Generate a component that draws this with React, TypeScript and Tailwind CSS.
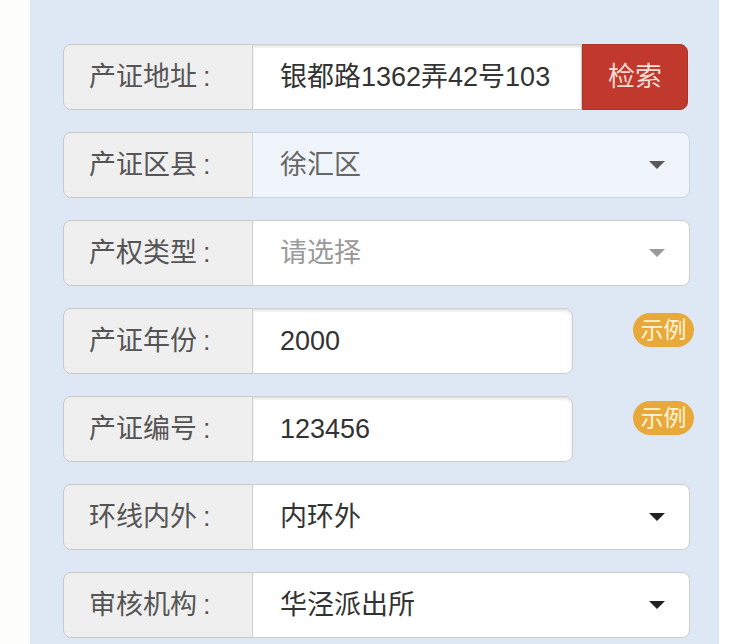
import React from "react";

const font = "font-['Liberation_Sans','Noto_Sans_CJK_SC',sans-serif]";

function Label({ text }: { text: string }) {
  return (
    <div className="flex w-[190px] shrink-0 items-center rounded-l-[8px] border border-[#c9c9c9] bg-[#efefef] pl-[25px] text-[27px] text-[#555]">
      {text}
      <span className="ml-[6px]">:</span>
    </div>
  );
}

function Arrow({ color }: { color: string }) {
  return (
    <svg width="16" height="8" viewBox="0 0 16 8" className="ml-auto">
      <path d="M0 0 L16 0 L8 8 Z" fill={color} />
    </svg>
  );
}

function Select({
  value,
  tone,
}: {
  value: string;
  tone: "disabled" | "placeholder" | "normal";
}) {
  const box =
    tone === "disabled"
      ? "bg-[#eff4fb] border-[#cdd6e0] text-[#666]"
      : tone === "placeholder"
        ? "bg-white border-[#cfcfcf] text-[#999]"
        : "bg-white border-[#cfcfcf] text-[#333]";
  const arrow = tone === "disabled" ? "#5a5a5a" : tone === "placeholder" ? "#9a9a9a" : "#222";
  return (
    <div
      className={`-ml-px flex w-[438px] items-center rounded-r-[8px] border pl-[27px] pr-[24px] text-[27px] ${box}`}
    >
      <span>{value}</span>
      <Arrow color={arrow} />
    </div>
  );
}

function Badge() {
  return (
    <div className="mt-[5px] ml-[60px] flex h-[34px] w-[61px] items-center justify-center rounded-full bg-[#e9a83a] text-[23px] text-[#fff4d8]">
      示例
    </div>
  );
}

export default function App() {
  return (
    <div className={`flex h-[644px] w-[750px] bg-white ${font}`}>
      <div className="w-[30px] bg-[#fdfdfa]" />
      <div className="flex w-[689px] flex-col gap-[22px] bg-[#dde8f4] pl-[33px] pt-[44px]">
        <div className="flex h-[66px]">
          <Label text="产证地址" />
          <div className="-ml-px flex w-[330px] items-center border border-[#cfcfcf] bg-white pl-[27px] text-[27px] text-[#333] shadow-[inset_0_2px_3px_rgba(0,0,0,0.12)]">
            银都路1362弄42号103
          </div>
          <button
            type="button"
            className="flex w-[106px] items-center justify-center rounded-r-[8px] border border-[#a9342a] bg-[#c0392c] text-[27px] text-[#f8dcd6]"
          >
            检索
          </button>
        </div>
        <div className="flex h-[66px]">
          <Label text="产证区县" />
          <Select value="徐汇区" tone="disabled" />
        </div>
        <div className="flex h-[66px]">
          <Label text="产权类型" />
          <Select value="请选择" tone="placeholder" />
        </div>
        <div className="flex h-[66px]">
          <Label text="产证年份" />
          <div className="-ml-px flex w-[321px] items-center rounded-r-[8px] border border-[#cfcfcf] bg-white pl-[27px] text-[27px] text-[#333] shadow-[inset_0_2px_3px_rgba(0,0,0,0.12)]">
            2000
          </div>
          <Badge />
        </div>
        <div className="flex h-[66px]">
          <Label text="产证编号" />
          <div className="-ml-px flex w-[321px] items-center rounded-r-[8px] border border-[#cfcfcf] bg-white pl-[27px] text-[27px] text-[#333] shadow-[inset_0_2px_3px_rgba(0,0,0,0.12)]">
            123456
          </div>
          <Badge />
        </div>
        <div className="flex h-[66px]">
          <Label text="环线内外" />
          <Select value="内环外" tone="normal" />
        </div>
        <div className="flex h-[66px]">
          <Label text="审核机构" />
          <Select value="华泾派出所" tone="normal" />
        </div>
      </div>
    </div>
  );
}
